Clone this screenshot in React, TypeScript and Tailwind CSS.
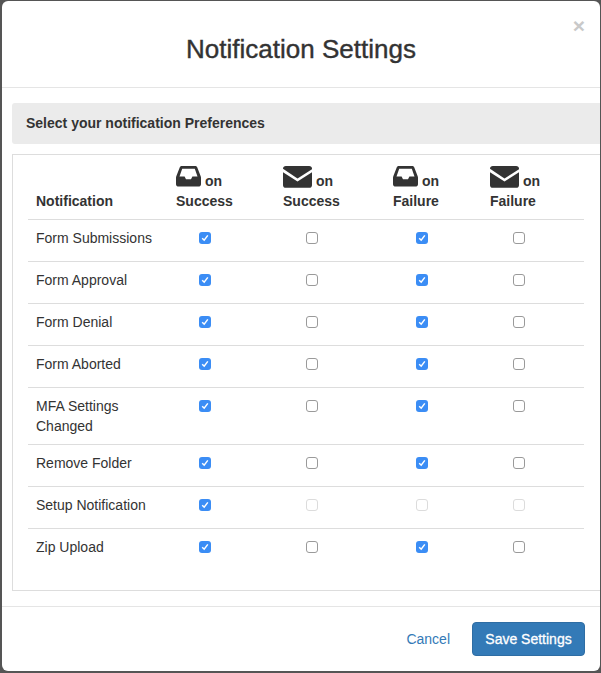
const FONT = "font-['Liberation_Sans',Arial,sans-serif]";

function InboxIcon() {
  return (
    <svg width="25" height="21" viewBox="0 0 25 22" preserveAspectRatio="none" className="mb-[2px] shrink-0">
      <path
        fill="#333"
        fillRule="evenodd"
        d="M6 0H19C20 0 20.8 .5 21.2 1.4L24.6 10.5C24.9 11.1 25 11.8 25 12.4V19C25 20.6 23.8 21.6 22.4 21.6H2.6C1.2 21.6 0 20.6 0 19V12.4C0 11.8 .1 11.1 .4 10.5L3.8 1.4C4.2 .5 5 0 6 0ZM6.2 3L3.5 11H8.6L10 14H15L16.4 11H21.5L18.8 3H6.2Z"
      />
    </svg>
  );
}

function EnvelopeIcon() {
  return (
    <svg width="29" height="22" viewBox="0 0 29 22" className="mb-[1px] shrink-0">
      <path fill="#333" d="M0 2.6C0 1 1.2 0 2.8 0H26.2C27.8 0 29 1 29 2.6V3.2L14.5 12.6L0 2.8Z" />
      <path fill="#333" d="M0 6.2L14.5 15.6L29 6.2V19.2C29 20.8 27.8 21.8 26.2 21.8H2.8C1.2 21.8 0 20.8 0 19.2Z" />
    </svg>
  );
}

function Check({ checked, disabled }: { checked?: boolean; disabled?: boolean }) {
  if (checked) {
    return (
      <span className="flex h-3 w-3 items-center justify-center rounded-[3px] bg-[#3b8df5]">
        <svg width="8" height="8" viewBox="0 0 8 8">
          <path d="M1.2 4.2L3.2 6.2L6.8 1.4" fill="none" stroke="#fff" strokeWidth="1.5" />
        </svg>
      </span>
    );
  }
  return (
    <span
      className={
        disabled
          ? "block h-3 w-3 rounded-[3px] border border-[#dcdcdc] bg-white"
          : "block h-3 w-3 rounded-[3px] border border-[#9a9a9a] bg-white"
      }
    />
  );
}

type Row = { name: string; states: ("on" | "off" | "dis")[]; tall?: boolean };

const rows: Row[] = [
  { name: "Form Submissions", states: ["on", "off", "on", "off"] },
  { name: "Form Approval", states: ["on", "off", "on", "off"] },
  { name: "Form Denial", states: ["on", "off", "on", "off"] },
  { name: "Form Aborted", states: ["on", "off", "on", "off"] },
  { name: "MFA Settings Changed", states: ["on", "off", "on", "off"], tall: true },
  { name: "Remove Folder", states: ["on", "off", "on", "off"] },
  { name: "Setup Notification", states: ["on", "dis", "dis", "dis"] },
  { name: "Zip Upload", states: ["on", "off", "on", "off"] },
];

const heads = [
  { icon: <InboxIcon />, label: "Success", gap: "gap-[4px]" },
  { icon: <EnvelopeIcon />, label: "Success", gap: "gap-[4px]" },
  { icon: <InboxIcon />, label: "Failure", gap: "gap-[4px]" },
  { icon: <EnvelopeIcon />, label: "Failure", gap: "gap-[4px]" },
];

const colWidths = ["w-[140px]", "w-[107px]", "w-[110px]", "w-[97px]", "w-[102px]"];

export default function App() {
  return (
    <div className={`${FONT} h-[673px] w-[601px] overflow-hidden bg-[#555] pl-[2px] pr-[1px] pt-[1px] text-[14px] leading-[20px] text-[#333]`}>
      <div className="flex h-[670px] w-[598px] flex-col rounded-[6px] bg-white">
        <header className="relative h-[87px] border-b border-[#e5e5e5] pt-[33px] text-center">
          <h1 className="text-[26px] font-normal leading-[30px] [-webkit-text-stroke:0.4px_#333]">Notification Settings</h1>
          <span className="absolute right-[15px] top-[14px] text-[21px] font-bold leading-[21px] text-[#c9c9c9]">×</span>
        </header>
        <div className="flex-1 pl-[10px] pt-[15px]">
          <div className="flex h-[41px] items-center rounded-l-[3px] bg-[#ebebeb] pb-[2px] pl-[14px] font-bold">
            Select your notification Preferences
          </div>
          <div className="mt-[10px] h-[437px] border border-r-0 border-[#ddd] px-[15px]">
            <table className="w-[556px] table-fixed border-collapse">
              <thead>
                <tr className="h-[64px] border-b border-[#ddd]">
                  <th className={`${colWidths[0]} px-[8px] pb-[8px] text-left align-bottom font-bold`}>Notification</th>
                  {heads.map((h, i) => (
                    <th key={i} className={`${colWidths[i + 1]} px-[8px] pb-[8px] text-left align-bottom font-bold`}>
                      <span className={`flex items-end ${h.gap}`}>
                        {h.icon}
                        <span className="leading-[16px]">on</span>
                      </span>
                      <span className="mt-[2px] block">{h.label}</span>
                    </th>
                  ))}
                </tr>
              </thead>
              <tbody>
                {rows.map((r, idx) => (
                  <tr
                    key={r.name}
                    className={`${r.tall ? "h-[57px]" : "h-[42px]"} ${idx < rows.length - 1 ? "border-b border-[#ddd]" : ""}`}
                  >
                    <td className={`px-[8px] ${r.tall ? "pt-[1px]" : "pb-[4px]"} align-middle`}>
                      {r.tall ? (
                        <>
                          MFA Settings
                          <br />
                          Changed
                        </>
                      ) : (
                        r.name
                      )}
                    </td>
                    {r.states.map((s, i) => (
                      <td key={i} className={`pl-[31px] ${r.tall ? "pb-[19px]" : "pb-[4px]"} align-middle`}>
                        <Check checked={s === "on"} disabled={s === "dis"} />
                      </td>
                    ))}
                  </tr>
                ))}
              </tbody>
            </table>
          </div>
        </div>
        <footer className="flex h-[65px] items-center justify-end gap-[22px] border-t border-[#e5e5e5] pb-[1px] pr-[15px]">
          <span className="text-[#337ab7]">Cancel</span>
          <span className="flex h-[34px] w-[113px] items-center justify-center rounded-[4px] border border-[#2e6da4] bg-[#337ab7] text-white [-webkit-text-stroke:0.3px_#fff]">
            Save Settings
          </span>
        </footer>
      </div>
    </div>
  );
}
